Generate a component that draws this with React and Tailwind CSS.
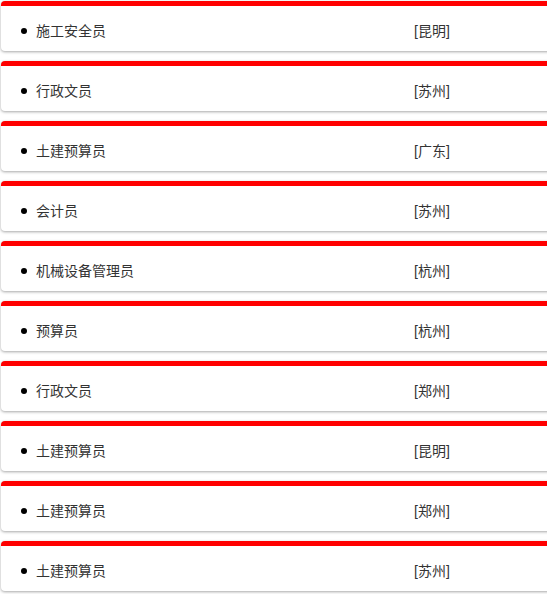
import React from "react";

const jobs = [
  { title: "施工安全员", city: "昆明" },
  { title: "行政文员", city: "苏州" },
  { title: "土建预算员", city: "广东" },
  { title: "会计员", city: "苏州" },
  { title: "机械设备管理员", city: "杭州" },
  { title: "预算员", city: "杭州" },
  { title: "行政文员", city: "郑州" },
  { title: "土建预算员", city: "昆明" },
  { title: "土建预算员", city: "郑州" },
  { title: "土建预算员", city: "苏州" },
];

const JobCard = ({ title, city }) => {
  return (
    <li className="mb-[10px] w-[556px] rounded border-t-[5px] border-[#ff0000] bg-white pt-[15px] pb-[10px] shadow-[0_1px_3px_rgba(0,0,0,0.35)]">
      <div className="flex items-center text-[14px] leading-[20px] text-[#333]">
        <span className="ml-[20px] mr-[9px] h-[6px] w-[6px] rounded-full bg-black" />
        <span className="w-[378px]">{title}</span>
        <span>[{city}]</span>
      </div>
    </li>
  );
};

export default function App() {
  return (
    <div
      className="h-[594px] w-[547px] overflow-hidden bg-white pt-px"
      style={{ fontFamily: '"Liberation Sans", "Noto Sans CJK SC", sans-serif' }}
    >
      <ul className="pl-px">
        {jobs.map((job, i) => (
          <JobCard key={i} title={job.title} city={job.city} />
        ))}
      </ul>
    </div>
  );
}
